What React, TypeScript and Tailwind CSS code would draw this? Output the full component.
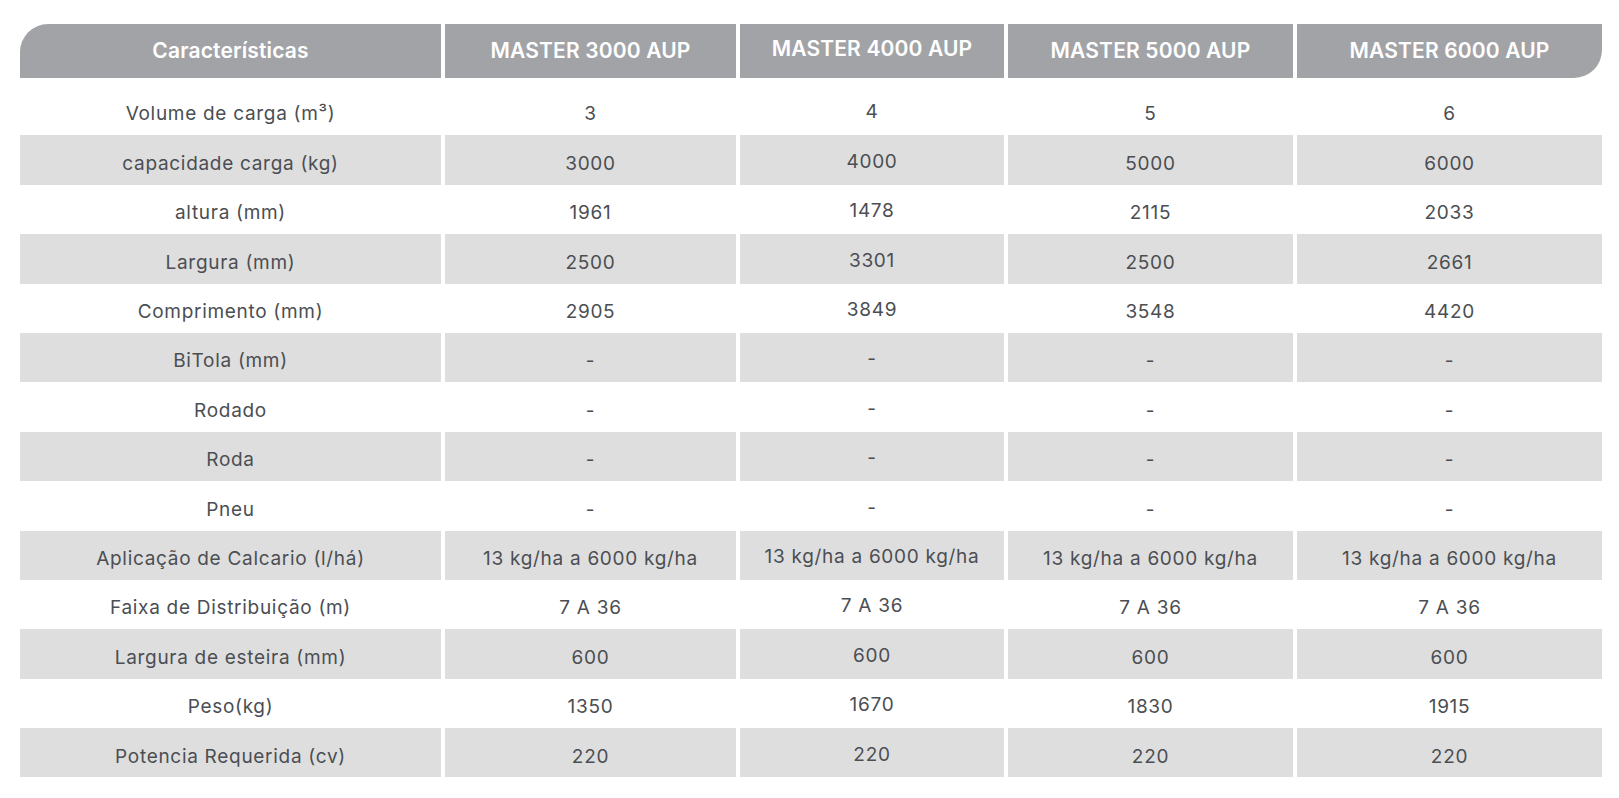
import React from "react";

const headers = ["Características", "MASTER 3000 AUP", "MASTER 4000 AUP", "MASTER 5000 AUP", "MASTER 6000 AUP"];

const rows: string[][] = [
  ["Volume de carga (m³)", "3", "4", "5", "6"],
  ["capacidade carga (kg)", "3000", "4000", "5000", "6000"],
  ["altura (mm)", "1961", "1478", "2115", "2033"],
  ["Largura (mm)", "2500", "3301", "2500", "2661"],
  ["Comprimento (mm)", "2905", "3849", "3548", "4420"],
  ["BiTola (mm)", "-", "-", "-", "-"],
  ["Rodado", "-", "-", "-", "-"],
  ["Roda", "-", "-", "-", "-"],
  ["Pneu", "-", "-", "-", "-"],
  ["Aplicação de Calcario (l/há)", "13 kg/ha a 6000 kg/ha", "13 kg/ha a 6000 kg/ha", "13 kg/ha a 6000 kg/ha", "13 kg/ha a 6000 kg/ha"],
  ["Faixa de Distribuição (m)", "7 A 36", "7 A 36", "7 A 36", "7 A 36"],
  ["Largura de esteira (mm)", "600", "600", "600", "600"],
  ["Peso(kg)", "1350", "1670", "1830", "1915"],
  ["Potencia Requerida (cv)", "220", "220", "220", "220"],
];

export default function App() {
  return (
    <div
      className="w-[1619px] h-[798px] bg-white overflow-hidden"
      style={{ fontFamily: "Inter, 'Open Sans', sans-serif" }}
    >
      <div className="ml-[20px] pt-[24px] w-[1582px]">
        <div className="grid grid-cols-[421px_291px_264px_285px_305px] gap-x-[4px] h-[54px]">
          {headers.map((h, i) => (
            <div
              key={i}
              className={
                "bg-[#a2a3a7] flex items-center justify-center text-white font-semibold text-[21px] tracking-[0.15px] " +
                (i === 0 ? "rounded-tl-[28px] " : "") +
                (i === 4 ? "rounded-br-[28px] " : "") +
                (i === 2 ? "pb-[4px]" : "")
              }
            >
              {h}
            </div>
          ))}
        </div>
        <div className="mt-[8px]">
          {rows.map((r, ri) => (
            <div
              key={ri}
              className="grid grid-cols-[421px_291px_264px_285px_305px] gap-x-[4px] h-[49.4px]"
            >
              {r.map((c, ci) => (
                <div
                  key={ci}
                  className={
                    "flex items-center justify-center text-[#4b4e53] text-[19px] tracking-[0.7px] " +
                    (ri % 2 === 1 ? "bg-[#dedede] " : "") +
                    (ci === 2 ? "pt-[4px]" : "pt-[8px]")
                  }
                >
                  {c}
                </div>
              ))}
            </div>
          ))}
        </div>
      </div>
    </div>
  );
}
